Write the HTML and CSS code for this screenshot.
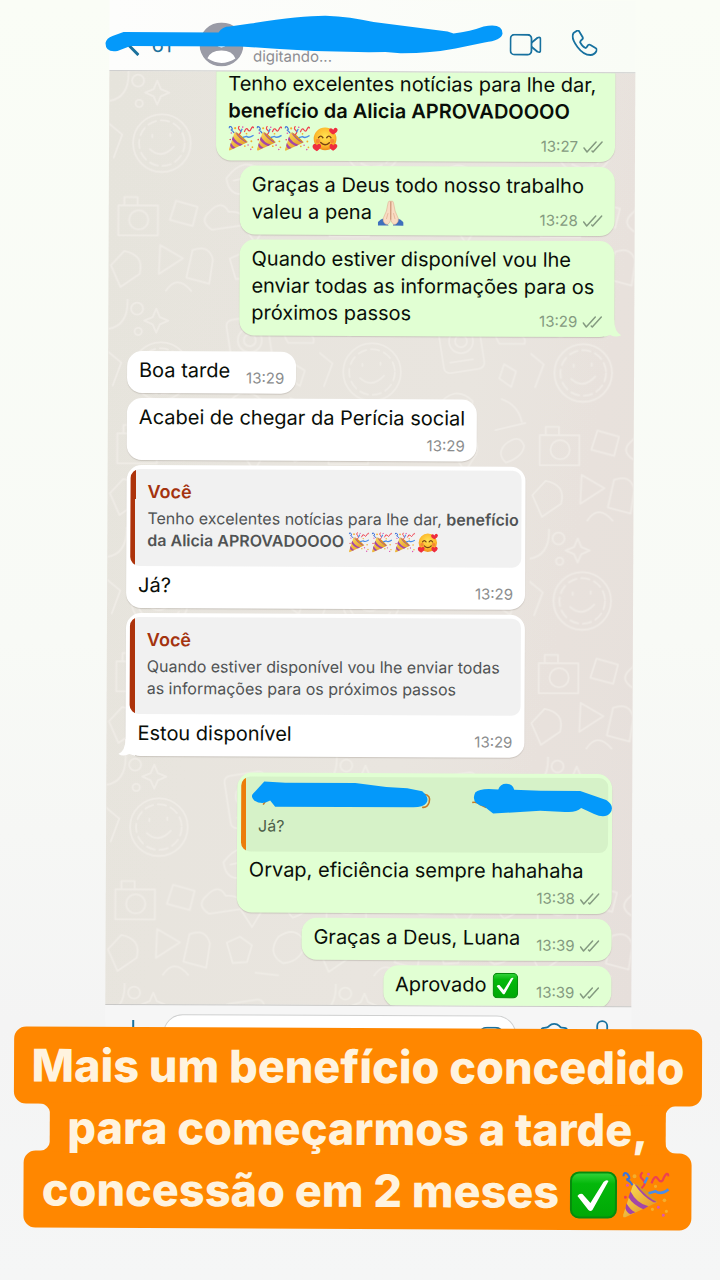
FILE: index.html
```html
<!DOCTYPE html>
<html lang="pt-BR">
<head>
<meta charset="utf-8">
<meta name="viewport" content="width=device-width, initial-scale=1">
<title>Conversa</title>
<link rel="stylesheet" href="styles.css">
</head>
<body>
<svg class="defs" aria-hidden="true">
  <defs>
    <linearGradient id="cone" x1="0" y1="0" x2="1" y2="1"><stop offset="0" stop-color="#ffe15c"/><stop offset="1" stop-color="#dc8d1c"/></linearGradient>
    <linearGradient id="green" x1="0" y1="0" x2="0" y2="1"><stop offset="0" stop-color="#35d43c"/><stop offset=".25" stop-color="#04b80b"/><stop offset="1" stop-color="#00a806"/></linearGradient>
    <radialGradient id="face" cx=".5" cy=".4" r=".6"><stop offset="0" stop-color="#ffe352"/><stop offset=".7" stop-color="#fdb92c"/><stop offset="1" stop-color="#ed8a1b"/></radialGradient>
    <symbol id="party" viewBox="0 0 48 48">
      <path d="M12 12 36 31 4 46Q1 47 2 43Z" fill="url(#cone)"/>
      <path d="M9 20q6 12 18 15l-5 3Q11 33 7 26ZM5 32q4 7 9 9l-5 2q-4-2-5-6ZM13 13q8 12 19 18l3 0Q24 17 13 13Z" fill="#a346a8"/>
      <path d="M13 11q9 4 24 20-11-3-24-20Z" fill="#d99622"/>
      <path d="M2 5q0-5 4-2 4 5-1 5 4 2 6 6" fill="none" stroke="#3e74d8" stroke-width="2.2"/>
      <path d="M20 17q6-5 1-9-4-3 0-7M30 12q3-9 6-5 4 6 6 0 4-8 5-2" fill="none" stroke="#ee4150" stroke-width="2.2"/>
      <path d="M27 22q4-1 7-2 5 4 13-2M26 6l-3 6" fill="none" stroke="#4b8de7" stroke-width="2.6"/>
      <g fill="#f4ae2c"><circle cx="13" cy="5" r="2"/><circle cx="34" cy="15" r="1.6"/><circle cx="43" cy="29" r="1.8"/><circle cx="31" cy="38" r="1.6"/><circle cx="45" cy="40" r="1.6"/></g>
      <g fill="#df55b0"><circle cx="6" cy="14" r="1.5"/><circle cx="37" cy="36" r="1.5"/><circle cx="42" cy="44" r="1.5"/><circle cx="4" cy="26" r="1.5" fill="#ee4150"/><circle cx="27" cy="3" r="1.5"/></g>
    </symbol>
    <symbol id="love" viewBox="0 0 48 48">
      <circle cx="24" cy="24" r="21" fill="url(#face)"/>
      <path d="M12 22q4-6 8 0M27 22q4-6 8 0M16 31q8 8 16 0" fill="none" stroke="#754214" stroke-width="2.6" stroke-linecap="round"/>
      <g fill="#f04c38" opacity=".45"><circle cx="11" cy="28" r="4"/><circle cx="37" cy="28" r="4"/></g>
      <path d="M39 16q-10-5-7-10 3-4 7 1 3-6 7-2 4 5-7 11ZM9 47Q-2 41 2 35q4-4 7 1 4-5 7-1 3 5-7 12ZM39 46q-9-5-6-11 3-4 6 1 4-5 7-1 3 5-7 11Z" fill="#ee2d3f"/>
    </symbol>
    <symbol id="pray" viewBox="0 0 48 48">
      <path d="M0 47V41Q5 35 13 33L20 47ZM48 47V41Q43 35 35 33L28 47Z" fill="#3f6fbc"/>
      <path d="M24 2q-4-2-5 3L16 20 10 34q-1 6 4 10l4 1q5-3 6-9ZM24 2q4-2 5 3l3 15 6 14q1 6-4 10l-4 1q-5-3-6-9Z" fill="#f9dcc3" stroke="#dba98b" stroke-width="1"/>
      <path d="M24 3v33" fill="none" stroke="#c58b6b" stroke-width="1.4"/>
      <path d="M19 24l-3 11M29 24l3 11" fill="none" stroke="#dba98b" stroke-width="1.2"/>
    </symbol>
    <symbol id="ok" viewBox="0 0 48 48">
      <rect x="1.5" y="1.5" width="45" height="45" rx="8" fill="url(#green)" stroke="#078b0c" stroke-width="2"/>
      <path d="M8 25q2-3 5-2l8 9L34 11q3-3 5-1L23 39q-2 2-4 0Z" fill="#fff"/>
    </symbol>
    <symbol id="ticks" viewBox="0 0 20 14"><path d="M1 8l3 4L13 2M9 11l1 1L19 2" fill="none" stroke="#849a80" stroke-width="1.5" stroke-linecap="round" stroke-linejoin="round"/></symbol>
    <pattern id="doodle" width="176" height="190" patternUnits="userSpaceOnUse" patternTransform="scale(1.2)">
      <g fill="none" stroke="#f4f1ec" stroke-width="1.5" stroke-linecap="round" stroke-linejoin="round">
        <circle cx="44" cy="60" r="24"/><circle cx="44" cy="60" r="19" stroke-dasharray="7 4"/><path d="M34 65q10 9 20-2M36 53v2M51 52v2"/>
        <path d="M40 8l3 7 7 3-7 3-3 7-3-7-7-3 7-3Z"/><circle cx="24" cy="8" r="5"/><circle cx="25" cy="27" r="3"/>
        <path d="M0 25q17-3 16-25M0 44l11 9-7 19"/>
        <rect x="101" y="15" width="34" height="44" rx="5" transform="rotate(-9 118 37)"/><circle cx="118" cy="34" r="10"/><circle cx="118" cy="34" r="5"/><path d="M109 52l19-3"/>
        <path d="M150 36q-8-12 4-16 10-1 10 9 9 0 7 7Z"/><path d="M98 89q15-20 30-5-2 16-17 18-11 1-13-13ZM104 91q11-2 19-8"/>
        <path d="M150 65l4-12 10 6-4 13ZM152 82q14 5 17 19M147 108l25-6M155 120q12-10 16 1-1 9-15 14-8-7-1-15Z"/>
        <path d="M8 112h33v25H8ZM13 112v-7h11v7"/><circle cx="25" cy="124" r="8"/><path d="M56 108l18 5-4 16-19-5Z"/>
        <path d="M84 117q10-11 16 0 15-1 12 11l-26 4q-11-7-2-15ZM122 112q13 4 9 16l-9 15-9-14q-2-14 9-17Z"/>
        <circle cx="123" cy="124" r="4"/><path d="M13 150q17 3 13 19l-16 11-8-18ZM43 145l19 11-20 13ZM70 149q14-5 17 8l-3 20-19-5Z"/>
        <path d="M101 156l11-5 10 7-4 14-12 1ZM144 151q14-10 22 4-1 16-18 18-14-8-4-22ZM48 183q9-14 21 0M125 181l19 2"/>
      </g>
    </pattern>
  </defs>
</svg>

<main class="story">
  <section class="phone">
    <header class="topbar">
      <a class="back" href="#" aria-label="Voltar">
        <svg width="12" height="22" viewBox="0 0 12 22" fill="none" stroke="#1b719c" stroke-width="3"><path d="M11 1 1 11l10 10"/></svg>
        <span>61</span>
      </a>
      <svg class="avatar" width="44" height="44" viewBox="0 0 44 44"><circle cx="22" cy="22" r="22" fill="#9a9ba6"/><circle cx="22" cy="18" r="7" fill="#fff"/><path d="M8 36q3-8 14-8t14 8q-14 9-28 0Z" fill="#fff"/></svg>
      <p class="status">digitando...</p>
      <button class="icon" aria-label="Chamada de vídeo"><svg width="32" height="22" viewBox="0 0 32 22" fill="none" stroke="#17719f" stroke-width="1.8" stroke-linejoin="round"><rect x="1" y="1" width="21" height="20" rx="4"/><path d="M22 9l6-5q3-1 3 1v12q0 2-3 1l-6-5"/></svg></button>
      <button class="icon" aria-label="Ligar"><svg width="26" height="26" viewBox="0 0 26 26" fill="none" stroke="#17719f" stroke-width="1.8" stroke-linejoin="round"><path d="M2 3 5 1q2-1 3 1l3 5q1 2-1 3-2 2-1 3 2 4 5 5 1 0 2-2t3-1l5 3q2 1 1 3-2 4-6 4-7 0-13-8Q-1 8 2 3Z"/></svg></button>
      <svg class="marker" width="400" height="42" viewBox="104 14 400 42" aria-hidden="true"><path d="M112 37 123 33H218Q222 27 229 27L250 24Q300 16 325 16 350 17 373 22L447 31 453 33Q470 31 483 26 502 22 502 33 501 40 484 42L455 48Q430 53 400 53L385 52Q330 53 275 49L240 47 130 47 117 52Q105 54 105 44 106 39 112 37Z" fill="#0499fa"/></svg>
    </header>

    <section class="chat">
      <svg class="wallpaper" width="100%" height="100%" aria-hidden="true"><rect width="100%" height="100%" fill="url(#doodle)"/></svg>

      <article class="bubble out large first">
        <p class="text">Tenho excelentes notícias para lhe dar,<br><b>benefício da Alicia APROVADOOOO</b><br><svg class="emoji"><use href="#party"/></svg><svg class="emoji"><use href="#party"/></svg><svg class="emoji"><use href="#party"/></svg><svg class="emoji"><use href="#love"/></svg></p>
        <p class="meta over"><time>13:27</time><svg class="ticks"><use href="#ticks"/></svg></p>
      </article>
      <article class="bubble out medium">
        <p class="text">Graças a Deus todo nosso trabalho<br>valeu a pena <svg class="emoji"><use href="#pray"/></svg></p>
        <p class="meta over"><time>13:28</time><svg class="ticks"><use href="#ticks"/></svg></p>
      </article>
      <article class="bubble out medium">
        <p class="text">Quando estiver disponível vou lhe<br>enviar todas as informações para os<br>próximos passos</p>
        <p class="meta over"><time>13:29</time><svg class="ticks"><use href="#ticks"/></svg></p>
        <svg class="tail tail-out" width="18" height="18" viewBox="0 0 18 18"><path d="M0 17V0H10Q10 12 17 15 12 18 6 15Z" fill="#e1ffd3"/></svg>
      </article>

      <article class="bubble in row turn">
        <p class="text">Boa tarde</p>
        <p class="meta"><time>13:29</time></p>
      </article>
      <article class="bubble in small">
        <p class="text">Acabei de chegar da Perícia social</p>
        <p class="meta"><time>13:29</time></p>
      </article>
      <article class="bubble in large quoted">
        <blockquote class="quote">
          <h2>Você</h2>
          <p>Tenho excelentes notícias para lhe dar, <b>benefício<br>da Alicia APROVADOOOO</b> <svg class="emoji"><use href="#party"/></svg><svg class="emoji"><use href="#party"/></svg><svg class="emoji"><use href="#party"/></svg><svg class="emoji"><use href="#love"/></svg></p>
        </blockquote>
        <p class="text">Já?</p>
        <p class="meta over"><time>13:29</time></p>
      </article>
      <article class="bubble in large quoted">
        <blockquote class="quote">
          <h2>Você</h2>
          <p>Quando estiver disponível vou lhe enviar todas<br>as informações para os próximos passos</p>
        </blockquote>
        <p class="text">Estou disponível</p>
        <p class="meta over"><time>13:29</time></p>
        <svg class="tail tail-in" width="18" height="18" viewBox="0 0 18 18"><path d="M18 17V0H8Q8 12 1 15 6 18 12 15Z" fill="#fff"/></svg>
      </article>

      <article class="bubble out medium quoted turn">
        <blockquote class="quote">
          <h2></h2>
          <p>Já?</p>
          <svg class="marker" width="364" height="38" viewBox="250 778 364 38" aria-hidden="true">
            <path d="M424 792q7 1 5 8-2 6-7 5M263 803l2-3M472 800q5-1 8 2l6 3" fill="none" stroke="#c77a25" stroke-width="1.6"/>
            <path d="M253 792 264 780 285 781H355L386 785 407 786 422 789Q430 796 426 801 423 805 413 805H275L270 799Q262 804 254 799 250 795 253 792Z" fill="#0499fa"/>
            <path d="M475 790Q480 785 498 787 500 781 506 781 512 781 514 787L540 788H580L606 797Q615 803 610 810 605 816 594 811L581 805Q576 810 565 809L540 808 493 811 484 804Q470 801 475 790Z" fill="#0499fa"/>
          </svg>
        </blockquote>
        <p class="text">Orvap, eficiência sempre hahahaha</p>
        <p class="meta"><time>13:38</time><svg class="ticks"><use href="#ticks"/></svg></p>
      </article>
      <article class="bubble out row">
        <p class="text">Graças a Deus, Luana</p>
        <p class="meta"><time>13:39</time><svg class="ticks"><use href="#ticks"/></svg></p>
      </article>
      <article class="bubble out row last">
        <p class="text">Aprovado <svg class="emoji"><use href="#ok"/></svg></p>
        <p class="meta"><time>13:39</time><svg class="ticks"><use href="#ticks"/></svg></p>
      </article>
    </section>

    <footer class="composer">
      <button class="icon add" aria-label="Anexar"><svg width="20" height="20" viewBox="0 0 20 20" fill="none" stroke="#17719f" stroke-width="2"><path d="M10 0v20M0 10h20"/></svg></button>
      <div class="field">
        <input type="text" aria-label="Mensagem">
        <button class="icon" aria-label="Figurinhas"><svg width="24" height="24" viewBox="0 0 24 24" fill="none" stroke="#17719f" stroke-width="1.8"><path d="M8 1h8q7 0 7 7v7l-8 8H8q-7 0-7-7V8q0-7 7-7ZM23 14h-4q-5 0-5 5v4"/></svg></button>
      </div>
      <button class="icon camera" aria-label="Câmera"><svg width="28" height="24" viewBox="0 0 28 24" fill="none" stroke="#17719f" stroke-width="1.8"><path d="M4 5q4 0 5-2 2-2 5-2t5 2q1 2 5 2 3 0 3 3v12q0 3-3 3H4q-3 0-3-3V8q0-3 3-3Z"/><circle cx="14" cy="13" r="6"/></svg></button>
      <button class="icon mic" aria-label="Gravar áudio"><svg width="18" height="28" viewBox="0 0 18 28" fill="none" stroke="#17719f" stroke-width="1.8"><rect x="4" y="1" width="10" height="17" rx="5"/><path d="M1 13q0 9 8 9t8-9M9 22v5"/></svg></button>
    </footer>
  </section>

  <h1 class="caption">
    <span class="line end">Mais um benefício concedido</span>
    <span class="line middle">para começarmos a tarde,</span>
    <span class="line end">concessão em 2 meses <svg class="emoji"><use href="#ok"/></svg><svg class="emoji"><use href="#party"/></svg></span>
  </h1>
</main>
</body>
</html>
```
FILE: styles.css
```css
* { box-sizing: border-box; }

body {
  margin: 0;
  min-height: 100vh;
  background: linear-gradient(#fafdf6, #f8faf6 50%, #f4f4f4 80%, #f5f6f6);
  color: #090e08;
  font-family: Inter, "Liberation Sans", sans-serif;
  overflow-x: hidden;
}

h1, h2, p, blockquote { margin: 0; }
button { padding: 0; border: 0; background: none; }
svg { display: block; }
.defs { position: absolute; width: 0; height: 0; }

/* the whole screen capture sits at a slight tilt */
.story { transform: rotate(0.25deg); }

.phone { margin: 0 87px 0 107px; }

.topbar {
  position: relative;
  z-index: 1;
  display: flex;
  align-items: flex-end;
  height: 72px;
  padding: 0 38px 4px 18px;
  border-bottom: 1px solid #cfcfcf;
  background: linear-gradient(90deg, #fdfdfc, #f9fcf6);
}

.back {
  display: flex;
  align-items: center;
  gap: 12px;
  margin-bottom: 9px;
  color: #1b719c;
  font-size: 20px;
  line-height: 24px;
  text-decoration: none;
}

.avatar { margin: 0 10px 0 27px; flex: none; }

.status {
  flex: 1;
  color: #8d8d92;
  font-size: 15px;
  line-height: 20px;
}

.topbar .icon { margin: 0 0 12px 30px; }
.topbar .marker { position: absolute; left: -5px; top: 14px; }

.chat {
  position: relative;
  display: flex;
  flex-direction: column;
  gap: 5px;
  padding: 0 20px 0 19px;
  overflow: hidden;
  border-bottom: 1px solid #c9c8c6;
  background: linear-gradient(100deg, #e7e4dd, #e9e5df 60%, #e7dfdb);
}

.wallpaper { position: absolute; left: 0; top: 0; opacity: 0.6; }

.bubble {
  position: relative;
  display: flex;
  flex-direction: column;
  max-width: 100%;
  padding: 6px 12px 5px;
  border-radius: 15px;
  box-shadow: 0 1px 1px rgba(90, 80, 70, 0.2);
}

.in { align-self: flex-start; background: #fff; }
.out { align-self: flex-end; background: #e1ffd3; }
.large { width: 399px; }
.medium { width: 375px; }
.small { width: 350px; }
.row { flex-direction: row; align-items: flex-end; gap: 16px; }
.turn { margin-top: 11px; }
.first { margin-top: -1px; padding-top: 0; border-radius: 0 0 15px 15px; }
.last { margin-bottom: -2px; }

.text {
  margin-bottom: 4px;
  font-size: 20px;
  line-height: 27px;
  white-space: nowrap;
}

b { font-weight: 600; }

.emoji {
  display: inline-block;
  width: 26px;
  height: 26px;
  margin: -2px 2px -2px 0;
  vertical-align: -5px;
}

.meta {
  display: flex;
  align-items: center;
  align-self: flex-end;
  gap: 5px;
  color: #8b8d8e;
  font-size: 15px;
  line-height: 20px;
}

.out .meta { color: #849a80; }
.over { margin-top: -20px; }
.ticks { width: 20px; height: 14px; }

.tail { position: absolute; bottom: -1px; }
.tail-out { right: -8px; }
.tail-in { left: -8px; }

.quoted { padding-top: 4px; }

.quote {
  position: relative;
  margin: 0 -8px 6px;
  padding: 11px 0 15px 17px;
  border-radius: 9px;
  background: linear-gradient(90deg, #ad330b 5px, #f1f1f1 5px);
  color: #505354;
  font-size: 16px;
  line-height: 22px;
  white-space: nowrap;
}

.quote h2 {
  height: 24px;
  margin-bottom: 3px;
  color: #a4330f;
  font-size: 18px;
  font-weight: 600;
  line-height: 24px;
}

.out .quote {
  margin-bottom: 5px;
  background: linear-gradient(90deg, #ec7c0b 5px, #d6f2c8 5px);
  color: #4d5f48;
}

.quote .emoji { width: 21px; height: 21px; vertical-align: -4px; }
.quote .marker { position: absolute; left: 9px; top: 3px; }

.composer {
  display: flex;
  align-items: flex-start;
  height: 48px;
  padding: 9px 20px 0 18px;
  background: #f6f6f6;
}

.add { margin: 6px 20px 0 0; }

.field {
  display: flex;
  flex: 1;
  height: 39px;
  padding: 6px 12px 0 16px;
  border: 1px solid #cfd0d0;
  border-radius: 20px;
  background: #fff;
}

.field input { flex: 1; min-width: 0; height: 24px; border: 0; background: none; font: inherit; }
.camera { margin: 7px 0 0 24px; }
.mic { margin: 4px 0 0 25px; }

.caption {
  position: relative;
  z-index: 2;
  display: flex;
  flex-direction: column;
  align-items: center;
  margin-top: -26px;
  color: #fff3df;
  font-size: 45px;
  font-weight: 800;
  white-space: nowrap;
}

.line { background: #ff8700; }
.end { padding: 0 18px; border-radius: 12px; line-height: 77px; }
.middle { position: relative; z-index: 1; margin: -1px 0; padding: 0 18px; line-height: 49px; }

/* concave corners where the narrow line meets the wide ones */
.middle::before,
.middle::after {
  content: "";
  position: absolute;
  top: 0;
  bottom: 0;
  width: 12px;
}

.middle::before {
  right: calc(100% - 1px);
  background:
    radial-gradient(circle at 0 100%, transparent 11px, #ff8700 12px) top / 12px 12px no-repeat,
    radial-gradient(circle at 0 0, transparent 11px, #ff8700 12px) bottom / 12px 12px no-repeat;
}

.middle::after {
  left: calc(100% - 1px);
  background:
    radial-gradient(circle at 100% 100%, transparent 11px, #ff8700 12px) top / 12px 12px no-repeat,
    radial-gradient(circle at 100% 0, transparent 11px, #ff8700 12px) bottom / 12px 12px no-repeat;
}

.caption .emoji { width: 48px; height: 48px; margin-right: 4px; vertical-align: -9px; }
```
